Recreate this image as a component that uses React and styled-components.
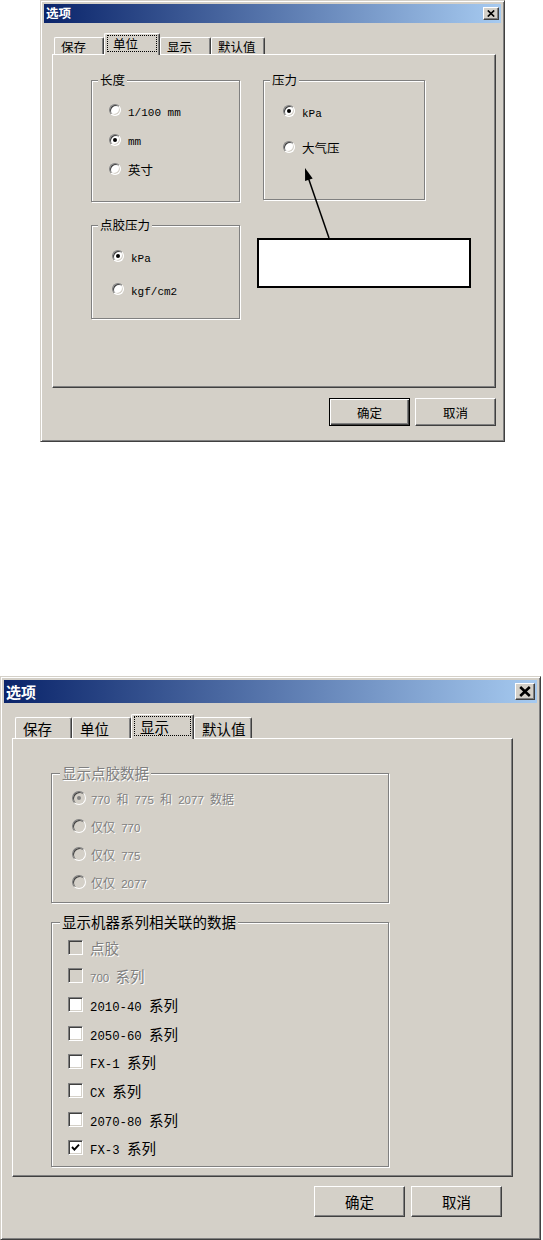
import React from 'react'
import styled, { createGlobalStyle, css } from 'styled-components'

const GlobalStyle = createGlobalStyle`
  body {
    margin: 0;
    background: #fff;
    font-family: "Noto Sans CJK SC", "Liberation Sans", sans-serif;
  }
`

const TABS = ['保存', '单位', '显示', '默认值']

// sizes of the two screenshots (the second one is scaled up a bit)
const small = {
  x: 40, top: 0, w: 465, h: 442,
  titleH: 19, titleFs: 12.5, closeW: 16, closeH: 13,
  tabMt: 10, tabPl: 2, tabRowH: 21, tabH: 17, tabW: [50, 56, 51, 54], tabPad: 6,
  fs: 12.5, lat: 11, latSans: 11, panelW: 444, panelH: 334,
  btnMt: 10, btnW: 81, btnH: 28, btnGap: 5, btnPr: 0,
  lh: 14, legendTop: -8, legendLeft: 6, radio: 12, check: 13, rowH: 16, textGap: 7,
}

const big = {
  x: 0, top: 234, w: 541, h: 564,
  titleH: 23, titleFs: 15, closeW: 20, closeH: 17,
  tabMt: 11, tabPl: 3, tabRowH: 24, tabH: 21, tabW: [57, 59, 63, 58], tabPad: 7,
  fs: 14.5, lat: 12.3, latSans: 11.5, panelW: 501, panelH: 439,
  btnMt: 9, btnW: 91, btnH: 31, btnGap: 6, btnPr: 11,
  lh: 18, legendTop: -10, legendLeft: 8, radio: 14, check: 15, rowH: 18, textGap: 5,
}

// the greyed radio list uses a smaller face
const bigDim = { ...big, fs: 12 }

const Page = styled.div`
  display: flex;
  flex-direction: column;
  align-items: flex-start;
  width: 543px;
  height: 1240px;
  overflow: hidden;
`

const Window = styled.div`
  box-sizing: border-box;
  display: flex;
  flex-direction: column;
  width: ${p => p.$w}px;
  height: ${p => p.$h}px;
  margin-left: ${p => p.$x}px;
  margin-top: ${p => p.$mt}px;
  padding: 3px;
  background: #d4d0c8;
  border: 1px solid;
  border-color: #d4d0c8 #404040 #404040 #d4d0c8;
  box-shadow: inset 1px 1px 0 #fff, inset -1px -1px 0 #808080;
`

const TitleBar = styled.div`
  display: flex;
  align-items: center;
  justify-content: space-between;
  height: ${p => p.$h}px;
  padding: 0 2px;
  background: linear-gradient(to right, #0a246a, #a6caf0);
`

const TitleText = styled.span`
  color: #fff;
  font-weight: 700;
  font-size: ${p => p.$fs}px;
  line-height: 1;
`

const CloseBtn = styled.span`
  box-sizing: border-box;
  display: flex;
  align-items: center;
  justify-content: center;
  width: ${p => p.$w}px;
  height: ${p => p.$h}px;
  background: #d4d0c8;
  border: 1px solid;
  border-color: #fff #404040 #404040 #fff;
  box-shadow: inset -1px -1px 0 #808080;
`

const Body = styled.div`
  display: flex;
  flex-direction: column;
  padding-left: 8px;
`

const TabRow = styled.div`
  display: flex;
  align-items: flex-end;
  height: ${p => p.$h}px;
  margin-top: ${p => p.$mt}px;
  padding-left: ${p => p.$pl}px;
`

const Tab = styled.div`
  box-sizing: border-box;
  display: flex;
  align-items: center;
  width: ${p => p.$w}px;
  height: ${p => p.$h}px;
  padding-left: ${p => p.$pad}px;
  font-size: ${p => p.$fs}px;
  background: #d4d0c8;
  border-top: 1px solid #fff;
  border-left: 1px solid #fff;
  border-right: 1px solid #404040;
  border-radius: 2px 2px 0 0;
  box-shadow: inset -1px 0 0 #808080;
  ${p => p.$active && css`
    position: relative;
    z-index: 1;
    margin-bottom: -1px;
    padding: 1px 2px 3px 2px;
    align-items: stretch;
  `}
`

const Focus = styled.span`
  flex: 1;
  display: flex;
  align-items: center;
  padding-left: 5px;
  border: 1px dotted #000;
`

const Panel = styled.div`
  position: relative;
  box-sizing: border-box;
  width: ${p => p.$w}px;
  height: ${p => p.$h}px;
  border: 1px solid;
  border-color: #fff #404040 #404040 #fff;
  box-shadow: inset -1px -1px 0 #808080;
`

const ButtonRow = styled.div`
  display: flex;
  justify-content: flex-end;
  gap: ${p => p.$gap}px;
  width: ${p => p.$w}px;
  margin-top: ${p => p.$mt}px;
  padding-right: ${p => p.$pr}px;
  box-sizing: border-box;
`

const Button = styled.button`
  box-sizing: border-box;
  width: ${p => p.$w}px;
  height: ${p => p.$h}px;
  padding: 0;
  font-family: inherit;
  font-size: ${p => p.$fs}px;
  color: #000;
  background: #d4d0c8;
  border: 1px solid;
  border-color: #fff #404040 #404040 #fff;
  box-shadow: inset -1px -1px 0 #808080;
  ${p => p.$default && css`
    border-color: #000;
    box-shadow: inset 1px 1px 0 #fff, inset -1px -1px 0 #404040, inset -2px -2px 0 #808080;
  `}
`

const Grid = styled.div`
  display: grid;
  grid-template-columns: 149px 162px;
  column-gap: 23px;
  row-gap: 23px;
  align-items: start;
  padding: 25px 0 0 38px;
`

const Stack = styled.div`
  display: flex;
  flex-direction: column;
  gap: 19px;
  padding: 34px 0 0 38px;
`

const Group = styled.div`
  position: relative;
  box-sizing: border-box;
  display: flex;
  flex-direction: column;
  width: ${p => p.$w}px;
  height: ${p => p.$h}px;
  padding: ${p => p.$pt}px 0 0 ${p => p.$pl}px;
  gap: ${p => p.$gap}px;
  border: 1px solid #808080;
  box-shadow: 1px 1px 0 #fff, inset 1px 1px 0 #fff;
`

const Legend = styled.span`
  position: absolute;
  top: ${p => p.$top}px;
  left: ${p => p.$left}px;
  padding: 0 2px;
  background: #d4d0c8;
  font-size: ${p => p.$fs}px;
  line-height: ${p => p.$lh}px;
  color: ${p => (p.$disabled ? '#808080' : '#000')};
  text-shadow: ${p => (p.$disabled ? '1px 1px 0 #fff' : 'none')};
`

const Option = styled.div`
  display: flex;
  align-items: center;
  height: ${p => p.$h}px;
  gap: ${p => p.$gap}px;
  font-size: ${p => p.$fs}px;
  color: ${p => (p.$disabled ? '#808080' : '#000')};
  text-shadow: ${p => (p.$disabled ? '1px 1px 0 #fff' : 'none')};
`

const Text = styled.span`
  white-space: nowrap;
`

const Lat = styled.span`
  white-space: pre;
  font-family: "Liberation Mono", monospace;
  font-size: ${p => p.$fs}px;
  ${p => p.$sans && css`
    font-family: "Liberation Sans", sans-serif;
    word-spacing: 3px;
  `}
`

const Radio = styled.span`
  position: relative;
  flex: none;
  box-sizing: border-box;
  width: ${p => p.$size}px;
  height: ${p => p.$size}px;
  border-radius: 50%;
  border: 1px solid;
  border-color: #808080 #fff #fff #808080;
  background: ${p => (p.$disabled ? '#d4d0c8' : '#fff')};
  box-shadow: inset 1px 1px 0 #404040, inset -1px -1px 0 #d4d0c8;
  &::after {
    content: '';
    display: ${p => (p.$checked ? 'block' : 'none')};
    position: absolute;
    left: 50%;
    top: 50%;
    width: 4px;
    height: 4px;
    border-radius: 50%;
    transform: translate(-50%, -50%);
    background: ${p => (p.$disabled ? '#808080' : '#000')};
  }
`

const Check = styled.span`
  flex: none;
  box-sizing: border-box;
  display: flex;
  align-items: center;
  justify-content: center;
  width: ${p => p.$size}px;
  height: ${p => p.$size}px;
  border: 1px solid;
  border-color: #808080 #fff #fff #808080;
  background: ${p => (p.$disabled ? '#d4d0c8' : '#fff')};
  box-shadow: inset 1px 1px 0 #404040, inset -1px -1px 0 #d4d0c8;
`

const Callout = styled.div`
  box-sizing: border-box;
  width: 214px;
  height: 50px;
  margin: 13px 0 0 -6px;
  background: #fff;
  border: 2px solid #000;
`

const Pointer = styled.svg`
  position: absolute;
  left: 247px;
  top: 110px;
  overflow: visible;
`

const Mixed = ({ text, m, disabled }) => (
  <Text>
    {text.split(/([\u4e00-\u9fff]+)/).filter(Boolean).map((part, i) =>
      /[\u4e00-\u9fff]/.test(part)
        ? <span key={i}>{part}</span>
        : <Lat key={i} $fs={disabled ? m.latSans : m.lat} $sans={disabled}>{part}</Lat>
    )}
  </Text>
)

const RadioItem = ({ m, label, checked, disabled }) => (
  <Option $h={m.rowH} $gap={m.textGap} $fs={m.fs} $disabled={disabled}>
    <Radio $size={m.radio} $checked={checked} $disabled={disabled} />
    <Mixed text={label} m={m} disabled={disabled} />
  </Option>
)

const CheckItem = ({ m, label, checked, disabled }) => (
  <Option $h={m.rowH} $gap={7} $fs={m.fs} $disabled={disabled}>
    <Check $size={m.check} $disabled={disabled}>
      {checked && (
        <svg width="9" height="9" viewBox="0 0 9 9">
          <polyline points="1,4 3.4,6.6 8,1.6" fill="none" stroke="#000" strokeWidth="1.9" />
        </svg>
      )}
    </Check>
    <Mixed text={label} m={m} disabled={disabled} />
  </Option>
)

const GroupBox = ({ m, title, disabled, children, ...rest }) => (
  <Group {...rest}>
    <Legend $top={m.legendTop} $left={m.legendLeft} $fs={m.fs} $lh={m.lh} $disabled={disabled}>
      {title}
    </Legend>
    {children}
  </Group>
)

const Dialog = ({ m, active, defaultOk, children }) => (
  <Window $x={m.x} $mt={m.top} $w={m.w} $h={m.h}>
    <TitleBar $h={m.titleH}>
      <TitleText $fs={m.titleFs}>选项</TitleText>
      <CloseBtn $w={m.closeW} $h={m.closeH}>
        <svg width={m.closeW - 8} height={m.closeH - 6} viewBox="0 0 8 7">
          <path d="M0.8 0.5 L7.2 6.5 M7.2 0.5 L0.8 6.5" stroke="#000" strokeWidth="1.7" />
        </svg>
      </CloseBtn>
    </TitleBar>
    <Body>
      <TabRow $h={m.tabRowH} $mt={m.tabMt} $pl={m.tabPl}>
        {TABS.map((t, i) => (
          <Tab
            key={t}
            $w={m.tabW[i]}
            $h={i === active ? m.tabRowH + 1 : m.tabH}
            $pad={m.tabPad}
            $fs={m.fs}
            $active={i === active}
          >
            {i === active ? <Focus>{t}</Focus> : t}
          </Tab>
        ))}
      </TabRow>
      <Panel $w={m.panelW} $h={m.panelH}>{children}</Panel>
      <ButtonRow $w={m.panelW} $mt={m.btnMt} $pr={m.btnPr} $gap={m.btnGap}>
        <Button $w={m.btnW} $h={m.btnH} $fs={m.fs} $default={defaultOk}>确定</Button>
        <Button $w={m.btnW} $h={m.btnH} $fs={m.fs}>取消</Button>
      </ButtonRow>
    </Body>
  </Window>
)

const series = [
  { label: '点胶', disabled: true },
  { label: '700 系列', disabled: true },
  { label: '2010-40 系列' },
  { label: '2050-60 系列' },
  { label: 'FX-1 系列' },
  { label: 'CX 系列' },
  { label: '2070-80 系列' },
  { label: 'FX-3 系列', checked: true },
]

const App = () => (
  <>
    <GlobalStyle />
    <Page>
      <Dialog m={small} active={1} defaultOk>
        <Grid>
          <GroupBox m={small} title="长度" $w={149} $h={122} $pt={21} $pl={17} $gap={13.5}>
            <RadioItem m={small} label="1/100 mm" />
            <RadioItem m={small} label="mm" checked />
            <RadioItem m={small} label="英寸" />
          </GroupBox>
          <GroupBox m={small} title="压力" $w={162} $h={120} $pt={22} $pl={19} $gap={20}>
            <RadioItem m={small} label="kPa" checked />
            <RadioItem m={small} label="大气压" />
          </GroupBox>
          <GroupBox m={small} title="点胶压力" $w={149} $h={94} $pt={22} $pl={20} $gap={17}>
            <RadioItem m={small} label="kPa" checked />
            <RadioItem m={small} label="kgf/cm2" />
          </GroupBox>
          <Callout />
        </Grid>
        <Pointer width="36" height="76" viewBox="0 0 36 76">
          <line x1="29" y1="73" x2="8" y2="12" stroke="#000" strokeWidth="1.5" />
          <polygon points="5,3 12.7,13.5 5.1,16" fill="#000" />
        </Pointer>
      </Dialog>

      <Dialog m={big} active={2}>
        <Stack>
          <GroupBox m={big} title="显示点胶数据" disabled $w={338} $h={130} $pt={15} $pl={20} $gap={10}>
            <RadioItem m={bigDim} label="770 和 775 和 2077 数据" checked disabled />
            <RadioItem m={bigDim} label="仅仅 770" disabled />
            <RadioItem m={bigDim} label="仅仅 775" disabled />
            <RadioItem m={bigDim} label="仅仅 2077" disabled />
          </GroupBox>
          <GroupBox m={big} title="显示机器系列相关联的数据" $w={338} $h={245} $pt={15} $pl={16} $gap={10.7}>
            {series.map(s => (
              <CheckItem key={s.label} m={big} {...s} />
            ))}
          </GroupBox>
        </Stack>
      </Dialog>
    </Page>
  </>
)

export default App
